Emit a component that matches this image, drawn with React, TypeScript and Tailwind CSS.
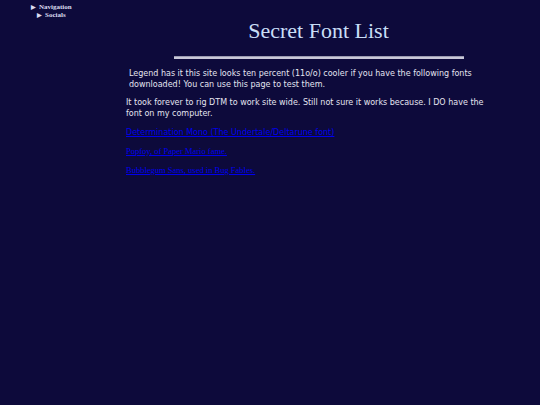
export default function App() {
  return (
    <div className="min-h-[405px] w-[540px] bg-[#0d0a3b] flex">
      <aside className="w-[97px] shrink-0 pt-[3px] pl-[31px] font-['Liberation_Serif',serif] font-bold text-[7px] leading-[8px] text-[#dcdcf0]">
        <div className="flex items-center gap-[3px]">
          <span className="text-[6px]">▶</span>
          <span>Navigation</span>
        </div>
        <div className="flex items-center gap-[3px] pl-[6px]">
          <span className="text-[6px]">▶</span>
          <span>Socials</span>
        </div>
      </aside>
      <main className="flex-1 flex flex-col">
        <h1 className="mt-[18px] text-center font-['Liberation_Serif',serif] text-[22px] leading-[26px] text-[#c9def7]">
          Secret Font List
        </h1>
        <div className="mt-[12px] self-center w-[290px] h-[3px] bg-[#c8c8d8] border-t border-[#9a9ab0]" />
        <div className="pl-[29px] pr-[52px] font-['DejaVu_Sans',sans-serif] text-[8px] leading-[11px] text-[#e4e4f0]">
          <p className="mt-[9px] pl-[3px]">
            Legend has it this site looks ten percent (11o/o) cooler if you have the following fonts downloaded! You can use this page to test them.
          </p>
          <p className="mt-[7px]">
            It took forever to rig DTM to work site wide. Still not sure it works because. I DO have the font on my computer.
          </p>
          <p className="mt-[8px]">
            <a href="#" className="text-[#0000ee] underline">Determination Mono (The Undertale/Deltarune font)</a>
          </p>
          <p className="mt-[8px] font-['Liberation_Serif',serif] text-[8.5px]">
            <a href="#" className="text-[#0000ee] underline">Popfoy, of Paper Mario fame.</a>
          </p>
          <p className="mt-[8px] font-['Liberation_Serif',serif] text-[8.5px]">
            <a href="#" className="text-[#0000ee] underline">Bubblegum Sans, used in Bug Fables.</a>
          </p>
        </div>
      </main>
    </div>
  );
}
